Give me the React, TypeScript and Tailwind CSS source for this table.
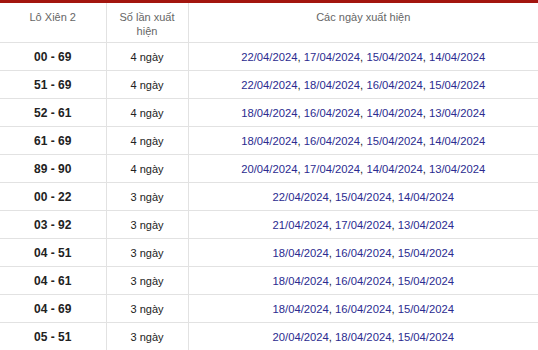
const rows: [string, number, string[]][] = [
  ["00 - 69", 4, ["22/04/2024", "17/04/2024", "15/04/2024", "14/04/2024"]],
  ["51 - 69", 4, ["22/04/2024", "18/04/2024", "16/04/2024", "15/04/2024"]],
  ["52 - 61", 4, ["18/04/2024", "16/04/2024", "14/04/2024", "13/04/2024"]],
  ["61 - 69", 4, ["18/04/2024", "16/04/2024", "15/04/2024", "14/04/2024"]],
  ["89 - 90", 4, ["20/04/2024", "17/04/2024", "14/04/2024", "13/04/2024"]],
  ["00 - 22", 3, ["22/04/2024", "15/04/2024", "14/04/2024"]],
  ["03 - 92", 3, ["21/04/2024", "17/04/2024", "13/04/2024"]],
  ["04 - 51", 3, ["18/04/2024", "16/04/2024", "15/04/2024"]],
  ["04 - 61", 3, ["18/04/2024", "16/04/2024", "15/04/2024"]],
  ["04 - 69", 3, ["18/04/2024", "16/04/2024", "15/04/2024"]],
  ["05 - 51", 3, ["20/04/2024", "18/04/2024", "15/04/2024"]],
];

export default function App() {
  return (
    <div className="w-[538px] h-[350px] overflow-hidden bg-white font-['Liberation_Sans',Arial,sans-serif]">
      <table className="w-full border-collapse border-t-[3px] border-t-[#a3150f] table-fixed">
        <colgroup>
          <col className="w-[106px]" />
          <col className="w-[82px]" />
          <col />
        </colgroup>
        <thead>
          <tr className="h-[41px] border-b border-[#e2e2e2] text-[11px] text-[#666] align-top">
            <th className="font-normal pt-[7px] leading-[14px]">Lô Xiên 2</th>
            <th className="font-normal pt-[7px] leading-[14px] border-x border-[#e2e2e2] px-2">Số lần xuất hiện</th>
            <th className="font-normal pt-[7px] leading-[14px]">Các ngày xuất hiện</th>
          </tr>
        </thead>
        <tbody>
          {rows.map(([pair, n, dates], i) => (
            <tr key={i} className="h-[28px] border-b border-[#e2e2e2]">
              <td className="text-center text-[12px] font-bold text-[#222] pt-px">{pair}</td>
              <td className="text-center text-[11px] text-[#222] border-x border-[#e2e2e2] pt-px">{n} ngày</td>
              <td className="text-center text-[11.25px] text-[#222] pt-px">
                {dates.map((d, j) => (
                  <span key={j}>
                    <span className="text-[#2b2b90]">{d}</span>
                    {j < dates.length - 1 && ", "}
                  </span>
                ))}
              </td>
            </tr>
          ))}
        </tbody>
      </table>
    </div>
  );
}
